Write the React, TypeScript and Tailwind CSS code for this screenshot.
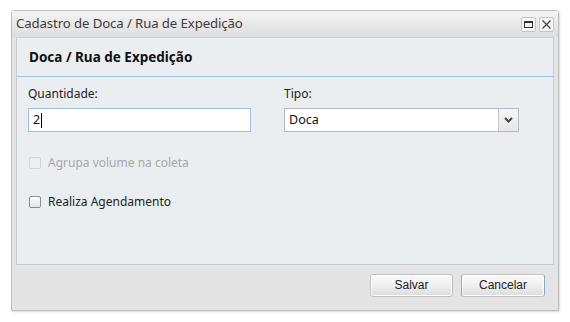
import React from "react";

export default function App() {
  return (
    <div className="w-[570px] h-[322px] bg-white pt-[10px] pl-[11px]" style={{ fontFamily: '"Noto Sans", "Open Sans", sans-serif' }}>
      <div className="w-[548px] h-[301px] border border-[#bdbdbd] rounded-tl-[3px] rounded-tr-[3px] bg-[#e4e4e4] flex flex-col shadow-[1px_1px_2px_rgba(0,0,0,0.15)]">
        <div className="h-[26px] flex items-center justify-between pl-[4px] pr-[4px] bg-gradient-to-b from-[#f4f4f4] to-[#dedede]">
          <span className="text-[13.2px] text-[#3c3c3c] tracking-[-0.1px]">Cadastro de Doca / Rua de Expedição</span>
          <div className="flex gap-[3px] mt-[1px]">
            <div className="w-[15px] h-[15px] border border-[#c4c4c4] rounded-[2px] bg-[#f6f6f6] flex items-center justify-center">
              <div className="w-[9px] h-[7px] border border-[#333] border-t-2"></div>
            </div>
            <div className="w-[15px] h-[15px] border border-[#c4c4c4] rounded-[2px] bg-[#f6f6f6] flex items-center justify-center">
              <svg width="9" height="9" viewBox="0 0 9 9"><path d="M0.5 0.5 L8.5 8.5 M8.5 0.5 L0.5 8.5" stroke="#444" strokeWidth="1.2" /></svg>
            </div>
          </div>
        </div>
        <div className="flex-1 flex flex-col px-[4px]">
          <div className="h-[228px] border border-[#c9c9c9] border-t-[#d0d0d0] bg-[#eaeef0] flex flex-col">
            <div className="h-[39px] border-b border-[#9ec3ea] flex items-center pl-[12px] text-[13.5px] font-bold text-[#111]">
              Doca / Rua de Expedição
            </div>
            <div className="flex pl-[11px] pt-[9px] gap-[33px]">
              <div className="flex flex-col">
                <label className="text-[12px] text-[#222] leading-[16px]">Quantidade:</label>
                <div className="mt-[6px] w-[223px] h-[24px] border border-[#9ec0e0] bg-white flex items-center pl-[4px] text-[12.5px] text-[#111]">
                  2<span className="w-px h-[15px] bg-black ml-[1px]"></span>
                </div>
              </div>
              <div className="flex flex-col">
                <label className="text-[12px] text-[#222] leading-[16px]">Tipo:</label>
                <div className="mt-[6px] w-[235px] h-[24px] border border-[#b4b8c8] bg-white flex">
                  <div className="flex-1 flex items-center pl-[4px] text-[12.5px] text-[#111]">Doca</div>
                  <div className="w-[20px] border-l border-[#c4c8d4] bg-gradient-to-b from-[#f6f6f6] to-[#e6e6e6] flex items-center justify-center">
                    <svg width="9" height="6" viewBox="0 0 9 6"><path d="M1 1 L4.5 4.5 L8 1" fill="none" stroke="#3d4a50" strokeWidth="2" /></svg>
                  </div>
                </div>
              </div>
            </div>
            <div className="flex items-center pl-[12px] mt-[22px] gap-[7px]">
              <div className="w-[12px] h-[12px] border border-[#d4d4d4] rounded-[2px] bg-[#eeeeee]"></div>
              <span className="text-[12px] text-[#a8a8a8]">Agrupa volume na coleta</span>
            </div>
            <div className="flex items-center pl-[12px] mt-[21px] gap-[7px]">
              <div className="w-[12px] h-[12px] border border-[#8e8e8e] rounded-[2px] bg-gradient-to-b from-[#fcfcfc] to-[#e4e4e4]"></div>
              <span className="text-[12px] text-[#222]">Realiza Agendamento</span>
            </div>
          </div>
          <div className="flex-1 flex justify-end items-center gap-[8px] pr-[9px] pb-[5px]" style={{ fontFamily: '"Liberation Sans", Arial, sans-serif' }}>
            <button className="w-[83px] h-[23px] border border-[#c0c0c0] rounded-[3px] bg-gradient-to-b from-[#fafafa] via-[#f0f0f0] to-[#dcdcdc] text-[12px] text-[#222] shadow-[inset_0_0_0_1px_#fff]">Salvar</button>
            <button className="w-[84px] h-[23px] border border-[#c0c0c0] border-l-[#7fb0c0] border-r-[#7fb0c0] rounded-[3px] bg-gradient-to-b from-[#fafafa] via-[#f0f0f0] to-[#dcdcdc] text-[12px] text-[#222] shadow-[inset_0_0_0_1px_#fff]">Cancelar</button>
          </div>
        </div>
      </div>
    </div>
  );
}
